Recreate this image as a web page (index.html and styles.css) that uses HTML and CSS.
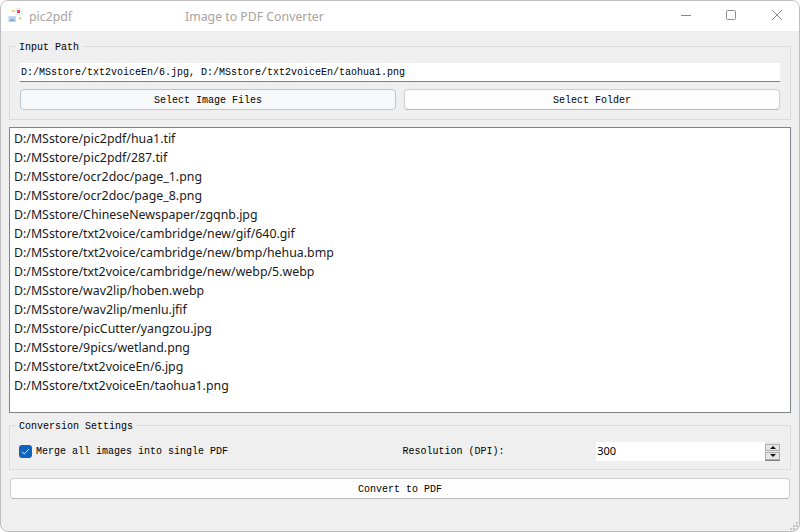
FILE: index.html
```html
<!DOCTYPE html>
<html lang="en">
<head>
<meta charset="utf-8">
<title>pic2pdf</title>
<link rel="stylesheet" href="styles.css">
</head>
<body>
<div class="window">
  <header class="titlebar">
    <svg class="app-icon" width="16" height="16" viewBox="0 0 16 16">
      <path d="M8 0.500h4l2.500 2.500v4H8z" fill="#f7f7f7" stroke="#e3e3e3" stroke-width=".6"/>
      <rect x="9" y="2" width="3" height="3" fill="#e8476a"/>
      <rect x="0.500" y="8" width="7.500" height="6" fill="#bcd6ee"/>
      <path d="M1 13l3-3 3 3z" fill="#7fa9d3"/>
      <rect x="4" y="2" width="3" height="2" fill="#f0cf8a"/>
      <rect x="11" y="9" width="2.500" height="2.500" fill="#f0cf8a"/>
    </svg>
    <span class="app-name">pic2pdf</span>
    <span class="window-title">Image to PDF Converter</span>
    <div class="window-controls">
      <svg width="12" height="12" viewBox="0 0 12 12"><path d="M2 6.500h10" stroke="#8c8c8c" fill="none"/></svg>
      <svg width="12" height="12" viewBox="0 0 12 12"><rect x="1.500" y="1.500" width="9" height="9" rx="1" stroke="#8c8c8c" fill="none"/></svg>
      <svg width="12" height="12" viewBox="0 0 12 12"><path d="M1 1l10 10M11 1L1 11" stroke="#8c8c8c" fill="none"/></svg>
    </div>
  </header>
  <main class="content">
    <fieldset class="group input-group">
      <legend>Input Path</legend>
      <div class="line-edit path-edit">D:/MSstore/txt2voiceEn/6.jpg, D:/MSstore/txt2voiceEn/taohua1.png</div>
      <div class="button-row">
        <button class="btn btn-focus">Select Image Files</button>
        <button class="btn">Select Folder</button>
      </div>
    </fieldset>
    <ul class="file-list">
      <li>D:/MSstore/pic2pdf/hua1.tif</li>
      <li>D:/MSstore/pic2pdf/287.tif</li>
      <li>D:/MSstore/ocr2doc/page_1.png</li>
      <li>D:/MSstore/ocr2doc/page_8.png</li>
      <li>D:/MSstore/ChineseNewspaper/zgqnb.jpg</li>
      <li>D:/MSstore/txt2voice/cambridge/new/gif/640.gif</li>
      <li>D:/MSstore/txt2voice/cambridge/new/bmp/hehua.bmp</li>
      <li>D:/MSstore/txt2voice/cambridge/new/webp/5.webp</li>
      <li>D:/MSstore/wav2lip/hoben.webp</li>
      <li>D:/MSstore/wav2lip/menlu.jfif</li>
      <li>D:/MSstore/picCutter/yangzou.jpg</li>
      <li>D:/MSstore/9pics/wetland.png</li>
      <li>D:/MSstore/txt2voiceEn/6.jpg</li>
      <li>D:/MSstore/txt2voiceEn/taohua1.png</li>
    </ul>
    <fieldset class="group settings-group">
      <legend>Conversion Settings</legend>
      <div class="settings-row">
        <label class="check">
          <span class="checkbox">
            <svg width="9" height="9" viewBox="0 0 9 9"><path d="M1 4.800l2.300 2.200L8 2" stroke="#cfe3f7" stroke-width="1" fill="none"/></svg>
          </span>
          <span class="check-text">Merge all images into single PDF</span>
        </label>
        <span class="dpi-label">Resolution (DPI):</span>
        <div class="spin">
          <div class="line-edit spin-edit">300</div>
          <div class="spin-buttons">
            <span class="spin-btn"><i class="arrow-up"></i></span>
            <span class="spin-btn"><i class="arrow-down"></i></span>
          </div>
        </div>
      </div>
    </fieldset>
    <button class="btn convert">Convert to PDF</button>
  </main>
  <svg class="grip" width="10" height="10" viewBox="0 0 10 10">
    <path d="M7 1h2v2H7zM4 4h2v2H4zM7 4h2v2H7zM1 7h2v2H1zM4 7h2v2H4zM7 7h2v2H7z" fill="#c4c4c4"/>
  </svg>
</div>
</body>
</html>
```
FILE: styles.css
```css
* { box-sizing: border-box; }
html, body { margin: 0; padding: 0; background: #fff; }
body { width: 800px; height: 532px; overflow: hidden; }

.window {
  position: relative;
  width: 800px;
  height: 532px;
  display: flex;
  flex-direction: column;
  background: #efefef;
  border: 1px solid #bdbdbd;
  border-radius: 8px;
  overflow: hidden;
  font-family: "Liberation Mono", monospace;
  font-size: 10px;
  color: #000;
}

.titlebar {
  height: 30px;
  flex: none;
  display: flex;
  align-items: center;
  background: #fff;
  padding-left: 7px;
  font-family: "Noto Sans", sans-serif;
  font-size: 12.3px;
  color: #a8a4a0;
}
.app-icon { flex: none; }
.app-name { margin-left: 5px; width: 156px; }
.window-title { flex: 1; }
.window-controls { display: flex; gap: 34px; padding-right: 16px; padding-bottom: 2px; align-items: center; }

.content {
  flex: 1;
  display: flex;
  flex-direction: column;
  padding: 8px 8px 0;
}

.group {
  margin: 0;
  min-width: 0;
  border: 1px solid #dcdcdc;
  padding: 0 10px;
  font: inherit;
}
.group legend {
  padding: 0 3px;
  margin-left: -4px;
  height: 14px;
  line-height: 17px;
  font-size: 10px;
}
.input-group { height: 81px; }
.settings-group { height: 52px; margin-top: 5px; }

.line-edit {
  background: #fff;
  border-bottom: 1px solid #7f7f7f;
  height: 19px;
  line-height: 19px;
  padding-left: 1px;
  white-space: nowrap;
}
.path-edit { margin-top: 10px; }

.button-row { display: flex; gap: 8px; margin-top: 7px; }
.btn {
  display: block;
  height: 21px;
  padding: 1px 0 0;
  background: #fdfdfd;
  border: 1px solid #d0d0d0;
  border-bottom-color: #b8b8b8;
  border-radius: 4px;
  font: inherit;
  color: #000;
}
.button-row .btn { flex: 1; }
.btn-focus { background: #f6f8fa; border-color: #b9c6d3; }

.file-list {
  list-style: none;
  margin: 7px 0 0;
  height: 286px;
  flex: none;
  width: 782px;
  padding: 1px 0 0 4px;
  background: #fff;
  border: 1px solid #7f8286;
  font-family: "Noto Sans", sans-serif;
  font-size: 12.35px;
  color: #1a1a1a;
}
.file-list li { height: 19px; line-height: 19px; white-space: nowrap; }

.settings-row {
  display: flex;
  align-items: center;
  margin: 9px 0 0 -1px;
  height: 20px;
  position: relative;
}
.check { display: flex; align-items: center; gap: 4px; width: 384px; }
.check-text { padding-top: 1px; }
.checkbox {
  width: 13px;
  height: 13px;
  flex: none;
  display: flex;
  align-items: center;
  justify-content: center;
  background: #0f62bd;
  border-radius: 3px;
}
.dpi-label { width: 194px; padding-top: 1px; }
.spin { width: 184px; display: flex; height: 19px; background: #e9e9e9; border-bottom: 1px solid #7f7f7f; }
.spin-edit {
  flex: 1;
  border-bottom: 0;
  font-family: "Noto Sans", sans-serif;
  font-size: 11px;
  line-height: 18px;
  padding-left: 1px;
}
.spin-buttons {
  width: 15px;
  padding-top: 2px;
  display: flex;
  flex-direction: column;
  gap: 1px;
  flex: none;
}
.spin-btn {
  height: 7.500px;
  display: flex;
  align-items: center;
  justify-content: center;
  background: #e6e6e6;
  border: 1px solid #adadad;
}
.arrow-up, .arrow-down {
  width: 0;
  height: 0;
  border-left: 3px solid transparent;
  border-right: 3px solid transparent;
}
.arrow-up { border-bottom: 3px solid #111; }
.arrow-down { border-top: 3px solid #111; }

.convert { width: 780px; margin: 8px 0 0 1px; flex: none; }

.grip { position: absolute; right: 0; bottom: 0; }
```
